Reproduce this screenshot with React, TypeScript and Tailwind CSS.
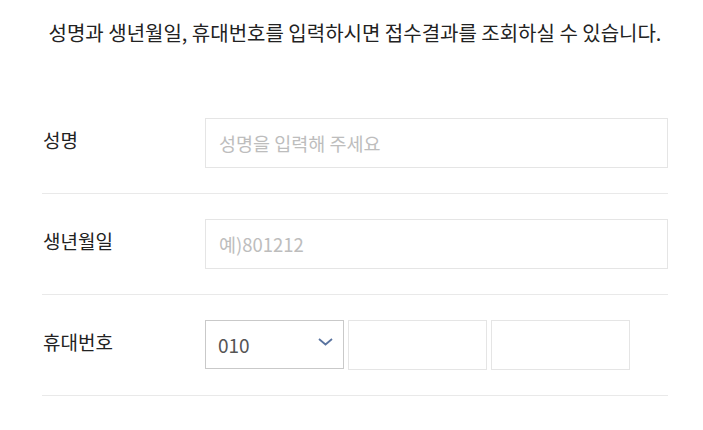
const font = { fontFamily: '"Noto Sans CJK KR", "Noto Sans", sans-serif' };

function Row({ label, children }: { label: string; children: React.ReactNode }) {
  return (
    <div className="flex items-center border-b border-[#e9e9e9] py-[25px]">
      <div className="-mt-[6px] w-[163px] shrink-0 pl-px text-[19px] text-[#222]">{label}</div>
      <div className="flex flex-1 gap-1">{children}</div>
    </div>
  );
}

export default function App() {
  return (
    <div className="min-h-[430px] bg-white" style={font}>
      <div className="ml-[42px] w-[626px]">
        <p className="pt-[19px] text-center text-[20px] leading-[28px] text-[#222]">
          성명과 생년월일, 휴대번호를 입력하시면 접수결과를 조회하실 수 있습니다.
        </p>
        <div className="mt-[46px]">
          <Row label="성명">
            <input
              placeholder="성명을 입력해 주세요"
              className="h-[50px] w-full border border-[#e5e5e5] px-[13px] text-[18.5px] outline-none placeholder:text-[#bdbdbd]"
            />
          </Row>
          <Row label="생년월일">
            <input
              placeholder="예)801212"
              className="h-[50px] w-full border border-[#e5e5e5] px-[13px] text-[18.5px] outline-none placeholder:text-[#bdbdbd]"
            />
          </Row>
          <Row label="휴대번호">
            <div className="flex h-[49px] w-[139px] items-center justify-between border border-[#c9c9c9] pl-[12px] pr-[10px] text-[19px] text-[#555]">
              <span className="mt-[2px]">010</span>
              <svg width="15" height="8" viewBox="0 0 15 8" className="-mt-[6px]">
                <polyline points="1,1 7.5,6.5 14,1" fill="none" stroke="#5a74a0" strokeWidth="1.8" />
              </svg>
            </div>
            <input className="h-[50px] w-[139px] border border-[#e5e5e5] outline-none" />
            <input className="h-[50px] w-[139px] border border-[#e5e5e5] outline-none" />
          </Row>
        </div>
      </div>
    </div>
  );
}
